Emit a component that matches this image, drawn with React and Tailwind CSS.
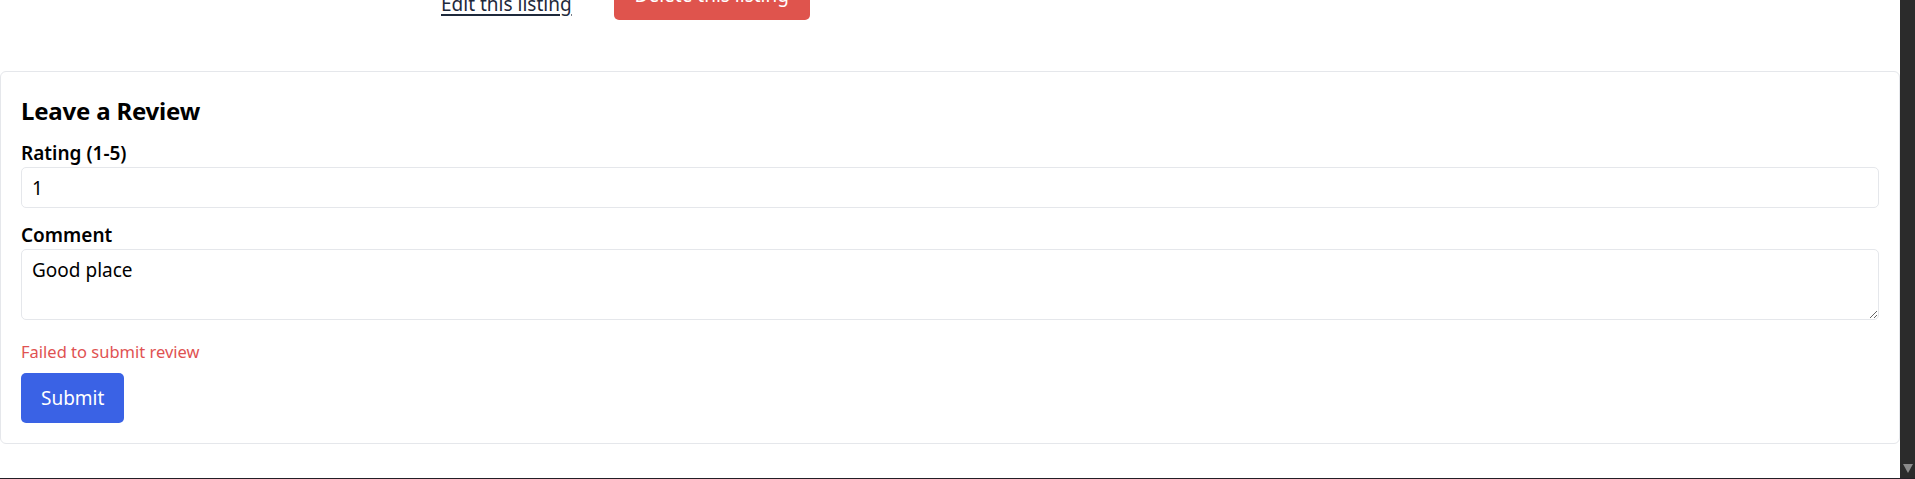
import React, { useState } from 'react';

export default function App() {
  const [rating, setRating] = useState('1');
  const [comment, setComment] = useState('Good place');
  const [error] = useState('Failed to submit review');

  return (
    <div
      className="flex h-[479px] w-[1915px] overflow-hidden border-b border-[#231f27] bg-white text-black"
      style={{ fontFamily: '"Noto Sans", "Open Sans", sans-serif' }}
    >
      {/* Page content */}
      <div className="flex w-[1900px] flex-col">
        {/* Listing actions (scrolled partly out of view) */}
        <div className="flex h-[71px] items-start gap-[42px] pl-[441px]">
          <a
            href="#"
            className="-mt-[9px] text-[19px] leading-[27px] text-[#1e293b] underline decoration-[1.5px] underline-offset-[3px]"
          >
            Edit this listing
          </a>
          <button className="-mt-[29px] h-[49px] rounded-[5px] bg-[#df544d] px-[21px] text-[19px] leading-[27px] text-white">
            Delete this listing
          </button>
        </div>

        {/* Review form */}
        <form
          onSubmit={(e) => e.preventDefault()}
          className="rounded-[6px] border border-[#e5e7eb] p-5"
        >
          <h2 className="mt-[2px] mb-[12px] text-[24px] font-bold leading-[34px] tracking-[-0.2px]">
            Leave a Review
          </h2>

          <label className="block text-[19px] font-semibold leading-[27px]">Rating (1-5)</label>
          <input
            type="number"
            min="1"
            max="5"
            value={rating}
            onChange={(e) => setRating(e.target.value)}
            className="block h-[41px] w-full rounded-[5px] border border-[#e5e7eb] px-[10px] text-[19px] outline-none"
          />

          <label className="mt-[14px] block text-[19px] font-semibold leading-[27px]">Comment</label>
          <textarea
            value={comment}
            onChange={(e) => setComment(e.target.value)}
            className="block h-[71px] w-full rounded-[5px] border border-[#e5e7eb] px-[10px] pt-[7px] text-[19px] leading-[27px] outline-none"
          />

          <p className="mt-[20px] text-[16.5px] leading-[24px] text-[#e05252]">{error}</p>

          <button
            type="submit"
            className="mt-[9px] h-[50px] rounded-[5px] bg-[#3a62e5] px-5 text-[19px] leading-[27px] text-white"
          >
            Submit
          </button>
        </form>
      </div>

      {/* Browser scrollbar */}
      <div className="flex w-[15px] flex-col items-center justify-end bg-[#2b2b2b] pb-[5px]">
        <div className="h-0 w-0 border-x-[5px] border-t-[9px] border-x-transparent border-t-[#8a8a8a]" />
      </div>
    </div>
  );
}
